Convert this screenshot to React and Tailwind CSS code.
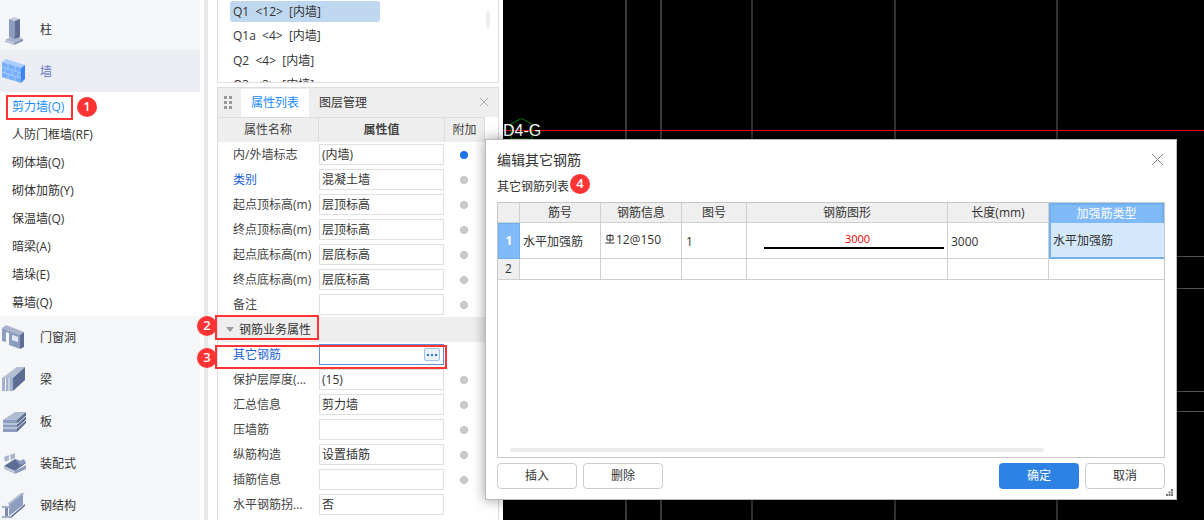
const fontStack = "font-['Open_Sans','Noto_Sans_CJK_SC',sans-serif]"

function ColumnIcon() {
  return (
    <svg width="40" height="42" viewBox="0 0 40 42" className="shrink-0">
      <polygon points="5,32 14,27 23,31 14,35" fill="#a9b5cd" />
      <polygon points="5,32 14,35 14,37 5,34" fill="#b9c3d6" />
      <polygon points="14,35 23,31 23,33 14,37" fill="#7d8bab" />
      <polygon points="9,11 14.5,9 20,11 14.5,13" fill="#c3cbdc" />
      <polygon points="9,11 14.5,13 14.5,31 9,29" fill="#8d9dc0" />
      <polygon points="14.5,13 20,11 20,29 14.5,31" fill="#5d6d94" />
    </svg>
  )
}

function WallIcon() {
  return (
    <svg width="40" height="42" viewBox="0 0 40 42" className="shrink-0">
      <polygon points="2,12 6,9 25,15 21,18" fill="#a8ccff" />
      <polygon points="2,12 21,18 21,33 2,27" fill="#74aefc" />
      <polygon points="21,18 25,15 25,29 21,33" fill="#3d86f0" />
      <path d="M2 17 L21 23 M2 22 L21 28 M8 14 L8 19 M15 16 L15 21 M5 19 L5 24 M12 21 L12 26 M18 23 L18 28 M8 24 L8 29 M15 26 L15 31" stroke="#a9cdfd" strokeWidth="1" fill="none" />
    </svg>
  )
}

function DoorIcon() {
  return (
    <svg width="40" height="42" viewBox="0 0 40 42" className="shrink-0">
      <polygon points="2,12 6,9 24,16 20,19" fill="#aab5cd" />
      <polygon points="2,12 20,19 20,33 12,30 12,24 18,26 18,21 12,19 12,30 9,29 9,17 6,16 6,26 2,25" fill="#8d9dc0" />
      <polygon points="20,19 24,16 24,31 20,33" fill="#5d6d94" />
      <polygon points="12,19 18,21 18,26 12,24" fill="#dfe4ee" />
    </svg>
  )
}

function BeamIcon() {
  return (
    <svg width="40" height="42" viewBox="0 0 40 42" className="shrink-0">
      <polygon points="2,20 17,9 25,9 13,20" fill="#b4bed3" />
      <polygon points="2,20 13,20 13,33 2,33" fill="#a3b0cb" />
      <polygon points="13,20 25,9 25,22 13,33" fill="#5d6d94" />
      <path d="M5.5 20 V33 M9 20 V33" stroke="#eef1f6" strokeWidth="1" />
    </svg>
  )
}

function SlabIcon() {
  return (
    <svg width="40" height="42" viewBox="0 0 40 42" className="shrink-0">
      <polygon points="3,20 15,12 26,12 17,20" fill="#b0bbd1" />
      <polygon points="3,20 17,20 17,32 3,32" fill="#8d9dc0" />
      <polygon points="17,20 26,12 26,23 17,32" fill="#5d6d94" />
      <path d="M3 24 H17 L26 16 M3 28 H17 L26 20" stroke="#e4e8f0" strokeWidth="1" fill="none" />
    </svg>
  )
}

function PrefabIcon() {
  return (
    <svg width="40" height="42" viewBox="0 0 40 42" className="shrink-0">
      <polygon points="4,15 9,13 9,18 5,20" fill="#a9b5cd" />
      <polygon points="10,13 15,11 15,16 11,18" fill="#a9b5cd" />
      <polygon points="4,24 15,17 26,21 15,29" fill="#5d6d94" />
      <polygon points="15,17 20,19 24,17 26,21 20,23" fill="#8d9dc0" />
      <polygon points="4,24 15,29 15,32 4,27" fill="#b9c3d6" />
      <polygon points="15,29 26,23 26,27 15,32" fill="#8d9dc0" />
    </svg>
  )
}

function SteelIcon() {
  return (
    <svg width="40" height="42" viewBox="0 0 40 42" className="shrink-0">
      <polygon points="7,20 21,9 25,9 11,21" fill="#b4bed3" />
      <polygon points="9,21 23,10 23,21 9,32" fill="#8d9dc0" />
      <polygon points="2,22 11,22 11,24 2,24" fill="#a3b0cb" />
      <polygon points="2,32 11,32 11,34 2,34" fill="#a3b0cb" />
      <rect x="5" y="24" width="3" height="8" fill="#7d8bab" />
      <polygon points="11,32 25,20 25,22 11,34" fill="#5d6d94" />
    </svg>
  )
}

function NavRow({ icon, label, active }) {
  return (
    <div className={`flex items-center h-[42px] ${active ? 'bg-[#ecedf2] text-[#6a78c8]' : 'text-[#333]'}`}>
      {icon}
      <span className="text-[12px] pt-px">{label}</span>
    </div>
  )
}

const wallItems = ['剪力墙(Q)', '人防门框墙(RF)', '砌体墙(Q)', '砌体加筋(Y)', '保温墙(Q)', '暗梁(A)', '墙垛(E)', '幕墙(Q)']

function Sidebar() {
  return (
    <div className="w-[200px] shrink-0 bg-[#f5f6f8] pt-[8px]">
      <NavRow icon={<ColumnIcon />} label="柱" />
      <NavRow icon={<WallIcon />} label="墙" active />
      <div className="bg-white">
        {wallItems.map((item, i) => (
          <div key={item} className={`h-[28px] pl-[12px] pt-px flex items-center text-[12px] ${i === 0 ? 'text-[#1a8cff]' : 'text-[#333]'}`}>
            {item}
          </div>
        ))}
      </div>
      <NavRow icon={<DoorIcon />} label="门窗洞" />
      <NavRow icon={<BeamIcon />} label="梁" />
      <NavRow icon={<SlabIcon />} label="板" />
      <NavRow icon={<PrefabIcon />} label="装配式" />
      <NavRow icon={<SteelIcon />} label="钢结构" />
    </div>
  )
}

function Dot({ on }) {
  return <span className={`block w-[8px] h-[8px] rounded-full ${on ? 'bg-[#1a73e8]' : 'bg-[#ccc] border border-[#bbb]'}`} />
}

function PropRow({ label, value, blue, dot = 'off', focused }) {
  return (
    <div className="flex h-[25px]">
      <div className={`w-[101px] pl-[15px] pt-px flex items-center text-[12px] whitespace-nowrap ${blue ? 'text-[#1a5fd8]' : 'text-[#444]'}`}>
        {label}
      </div>
      <div className={`w-[125px] h-[21px] mt-[2px] px-[2px] flex items-center text-[12px] text-[#333] border ${focused ? 'border-[#5b8fe0]' : 'border-[#e0e0e0]'}`}>
        {value}
        {focused && (
          <span className="ml-auto mr-px w-[16px] h-[13px] border border-[#9cc0ee] bg-[#e8f1fc] rounded-[2px] flex items-center justify-center gap-[2px]">
            <i className="w-[2px] h-[2px] bg-[#2e6fd0]" />
            <i className="w-[2px] h-[2px] bg-[#2e6fd0]" />
            <i className="w-[2px] h-[2px] bg-[#2e6fd0]" />
          </span>
        )}
      </div>
      <div className="w-[40px] flex items-center justify-center">
        {dot !== 'none' && <Dot on={dot === 'on'} />}
      </div>
    </div>
  )
}

function PropertyPanel() {
  return (
    <div className="flex-1 border-l border-r border-[#ddd] overflow-hidden">
      <div className="flex h-[30px] bg-[#eee] border-t border-[#ddd] items-end">
        <div className="w-[23px] h-full grid grid-cols-2 gap-[2px] content-center pl-[6px] pr-[9px]">
          {[0, 1, 2, 3, 4, 5].map((n) => <i key={n} className="w-[3px] h-[3px] bg-[#999]" />)}
        </div>
        <div className="w-[68px] h-[28px] bg-white text-[#1a8cff] text-[12px] flex items-center justify-center">属性列表</div>
        <div className="ml-[10px] h-[28px] text-[#333] text-[12px] flex items-center">图层管理</div>
        <svg width="10" height="10" viewBox="0 0 10 10" className="ml-auto mr-[9px] mb-[10px]">
          <path d="M1 1 L9 9 M9 1 L1 9" stroke="#aaa" strokeWidth="1" />
        </svg>
      </div>
      <div className="flex h-[25px] w-[267px] bg-[#eee] text-[12px] text-[#444] border-t border-[#ddd]">
        <div className="w-[101px] border-r border-[#ddd] flex items-center justify-center">属性名称</div>
        <div className="w-[126px] border-r border-[#ddd] flex items-center justify-center font-bold">属性值</div>
        <div className="w-[40px] border-r border-[#ddd] flex items-center justify-center">附加</div>
      </div>
      <PropRow label="内/外墙标志" value="(内墙)" dot="on" />
      <PropRow label="类别" value="混凝土墙" blue />
      <PropRow label="起点顶标高(m)" value="层顶标高" />
      <PropRow label="终点顶标高(m)" value="层顶标高" />
      <PropRow label="起点底标高(m)" value="层底标高" />
      <PropRow label="终点底标高(m)" value="层底标高" />
      <PropRow label="备注" value="" />
      <div className="h-[25px] bg-[#eee] flex items-center text-[12px] text-[#333]">
        <svg width="8" height="5" viewBox="0 0 8 5" className="ml-[8px] mr-[5px]">
          <path d="M0 0 H8 L4 5 Z" fill="#999" />
        </svg>
        钢筋业务属性
      </div>
      <PropRow label="其它钢筋" value="" blue dot="none" focused />
      <PropRow label="保护层厚度(..." value="(15)" />
      <PropRow label="汇总信息" value="剪力墙" />
      <PropRow label="压墙筋" value="" />
      <PropRow label="纵筋构造" value="设置插筋" />
      <PropRow label="插筋信息" value="" />
      <PropRow label="水平钢筋拐..." value="否" dot="none" />
    </div>
  )
}

const wallList = ['Q1  <12>  [内墙]', 'Q1a  <4>  [内墙]', 'Q2  <4>  [内墙]', 'Q3  <3>  [内墙]']

function MiddlePanel() {
  return (
    <div className="w-[282px] shrink-0 flex flex-col gap-[4px]">
      <div className="relative h-[83px] shrink-0 border-l border-r border-b border-[#ddd] overflow-hidden text-[12px] text-[#333] pl-[12px] pt-px">
        {wallList.map((w, i) => (
          <div key={w} className={`w-[150px] h-[21px] mb-[3.5px] pl-[3px] flex items-center rounded-[3px] whitespace-pre ${i === 0 ? 'bg-[#c0d7f0]' : ''}`}>
            {w}
          </div>
        ))}
        <div className="absolute left-[268px] top-[11px] w-[4px] h-[17px] bg-[#eee] rounded-full" />
      </div>
      <PropertyPanel />
    </div>
  )
}

function Canvas() {
  return (
    <div className="relative flex-1 bg-black overflow-hidden">
      <svg width="701" height="520" className="block">
        <path d="M123 0 V520 M158 0 V520" stroke="#777" strokeWidth="1" />
        <path d="M249 0 V520 M392 0 V520 M554 0 V520" stroke="#666" strokeWidth="1" />
        <path d="M0 256.5 H701 M0 288.5 H701 M0 391.5 H701 M0 411.5 H701" stroke="#555" strokeWidth="1" />
        <path d="M0 130.5 H701" stroke="#f00" strokeWidth="1" />
        <polygon points="18.5,118.5 29,124 29,139 8,139 8,124" fill="none" stroke="#0a7a0a" strokeWidth="1" />
      </svg>
      <span className="absolute left-0 top-[120px] text-[16px] leading-[22px] text-white font-['Liberation_Sans',sans-serif]">D4-G</span>
    </div>
  )
}

const colClass = 'grid grid-cols-[22px_81px_81px_65px_201px_101px_115px]'

function Cell({ children, className = '' }) {
  return <div className={`border-r border-b border-[#d0d0d0] flex items-center text-[12px] text-[#333] ${className}`}>{children}</div>
}

function RebarTable() {
  return (
    <div className="relative h-[256px] border border-[#c8c8c8]">
      <div className={`${colClass} h-[20px]`}>
        {['', '筋号', '钢筋信息', '图号', '钢筋图形', '长度(mm)'].map((h) => (
          <Cell key={h} className="bg-[#efefef] justify-center">{h}</Cell>
        ))}
        <div className="bg-[#7fb9f8] border-2 border-[#6fb0f0] border-b-0 text-white text-[12px] flex items-center justify-center">加强筋类型</div>
      </div>
      <div className={`${colClass} h-[36px]`}>
        <div className="bg-[#80bafa] border border-[#6fb0f0] text-white font-bold text-[12px] flex items-center justify-center">1</div>
        <Cell className="pl-[3px] pt-[2px]">水平加强筋</Cell>
        <Cell className="pl-[4px] pb-[2px] gap-px">
          <svg width="10" height="10" viewBox="0 0 10 10" className="mb-[2px]">
            <path d="M2 1.5 H8 V6 H2 Z M5 0 V8.5 M0.5 9 H9.5" stroke="#333" strokeWidth="1" fill="none" />
          </svg>
          12@150
        </Cell>
        <Cell className="pl-[4px] pt-[2px]">1</Cell>
        <Cell className="relative">
          <span className="absolute left-[98px] top-[9px] text-[11px] text-[#e00] leading-[14px]">3000</span>
          <span className="absolute left-[17px] right-[3px] top-[24px] h-[2px] bg-black" />
        </Cell>
        <Cell className="pl-[3px] pt-[2px]">3000</Cell>
        <div className="bg-[#d3e8fd] border-l-2 border-b-2 border-[#74b0ee] pl-[2px] pt-[2px] text-[12px] text-[#333] flex items-center">水平加强筋</div>
      </div>
      <div className={`${colClass} h-[21px]`}>
        <Cell className="bg-[#efefef] justify-center">2</Cell>
        <Cell />
        <Cell />
        <Cell />
        <Cell />
        <Cell />
        <div className="border-b border-[#d0d0d0]" />
      </div>
      <div className="absolute left-[12px] top-[245px] w-[534px] h-[4px] rounded-full bg-[#ececec]" />
    </div>
  )
}

function DialogButton({ children, primary }) {
  return (
    <button className={`w-[80px] h-[26px] rounded-[4px] text-[12px] ${primary ? 'bg-[#2e82e4] text-white' : 'bg-white border border-[#ccc] text-[#333]'}`}>
      {children}
    </button>
  )
}

function RebarDialog() {
  return (
    <div className="absolute left-[485px] top-[139px] w-[692px] h-[361px] bg-white border border-[#bbb] shadow-[0_0_12px_rgba(0,0,0,0.4)] px-[11px]">
      <div className="h-[38px] flex items-center justify-between text-[14px] text-[#333]">
        编辑其它钢筋
        <svg width="13" height="13" viewBox="0 0 13 13" className="mr-[1px]">
          <path d="M1 1 L12 12 M12 1 L1 12" stroke="#888" strokeWidth="1" />
        </svg>
      </div>
      <div className="h-[24px] pb-[6px] flex items-center text-[12px] text-[#333]">其它钢筋列表</div>
      <RebarTable />
      <div className="mt-[5px] flex gap-[6px]">
        <DialogButton>插入</DialogButton>
        <DialogButton>删除</DialogButton>
        <div className="flex-1" />
        <DialogButton primary>确定</DialogButton>
        <DialogButton>取消</DialogButton>
      </div>
      <svg width="8" height="8" viewBox="0 0 8 8" className="absolute right-[2px] bottom-[2px]">
        <path d="M5 0 H7 V2 H5 Z M2.5 2.5 H4.5 V4.5 H2.5 Z M5 2.5 H7 V4.5 H5 Z M0 5 H2 V7 H0 Z M2.5 5 H4.5 V7 H2.5 Z M5 5 H7 V7 H5 Z" fill="#777" />
      </svg>
    </div>
  )
}

function Badge({ n, className }) {
  return (
    <div className={`absolute w-[20px] h-[20px] rounded-full bg-[#f33] text-white text-[13px] font-semibold flex items-center justify-center ${className}`}>
      {n}
    </div>
  )
}

export default function App() {
  return (
    <div className={`relative w-[1204px] h-[520px] overflow-hidden bg-white flex ${fontStack}`}>
      <Sidebar />
      <div className="w-[17px] shrink-0 pl-[4px]">
        <div className="w-[4px] h-full bg-[#e8e8e8]" />
      </div>
      <MiddlePanel />
      <div className="w-[4px] shrink-0" />
      <Canvas />
      <RebarDialog />

      <div className="absolute left-[6px] top-[95px] w-[67px] h-[25px] border-2 border-[#f33]" />
      <Badge n="1" className="left-[77px] top-[97px]" />
      <div className="absolute left-[215px] top-[315px] w-[104px] h-[25px] border-2 border-[#f33]" />
      <Badge n="2" className="left-[197px] top-[316px]" />
      <div className="absolute left-[215px] top-[345px] w-[232px] h-[24px] border-2 border-[#f33]" />
      <Badge n="3" className="left-[197px] top-[348px]" />
      <Badge n="4" className="left-[570px] top-[174px]" />
    </div>
  )
}
